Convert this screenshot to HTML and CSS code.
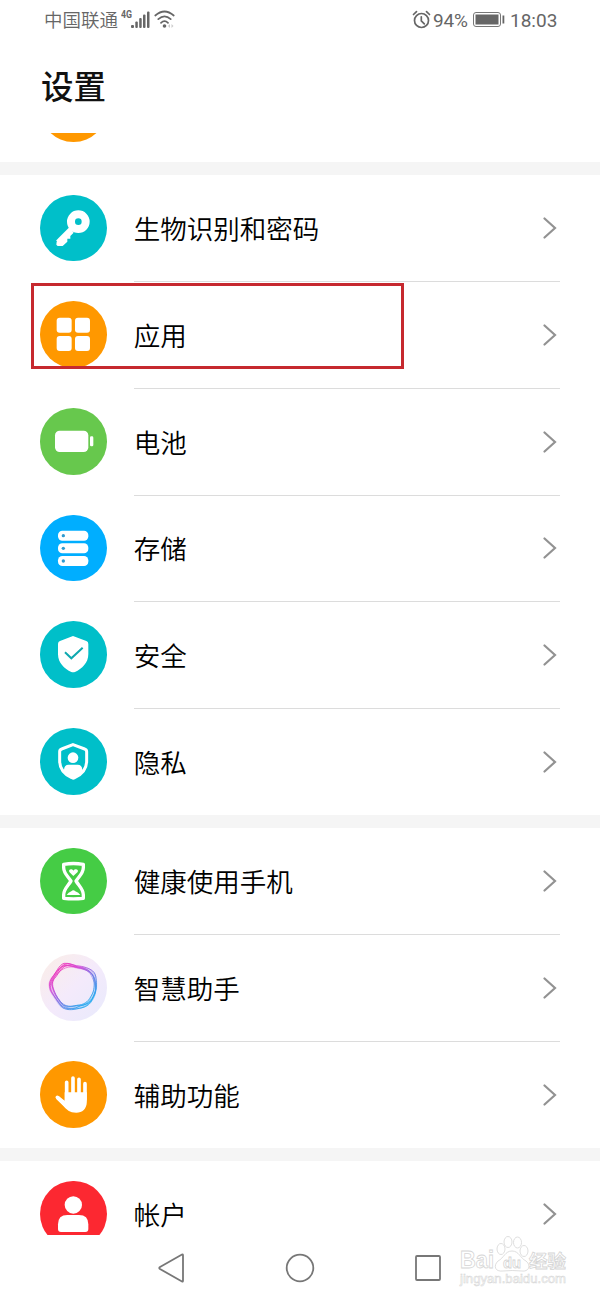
FILE: index.html
```html
<!DOCTYPE html>
<html lang="zh-CN">
<head>
<meta charset="utf-8">
<title>设置</title>
<link rel="stylesheet" href="styles.css">
</head>
<body>
<div class="phone">
  <header class="status">
    <span class="carrier">中国联通</span>
    <svg class="signal" width="56" height="24" viewBox="0 0 56 24">
      <text class="net" x="0" y="10" textLength="11" lengthAdjust="spacingAndGlyphs">4G</text>
      <g fill="#666"><rect x="10" y="17" width="3" height="3" rx="1"/><rect x="14.3" y="13.5" width="2.5" height="6.5" rx="1"/><rect x="18.2" y="10" width="2.5" height="10" rx="1"/><rect x="22" y="6.500" width="2.500" height="13.500" rx="1"/><rect x="26" y="3.500" width="2.500" height="16.500" rx="1"/></g>
      <g fill="none" stroke="#666" stroke-width="1.700" stroke-linecap="round"><path d="M34.300 7.500Q43.500-.5 52.700 7.500M37.300 11.200Q43.500 5.500 49.700 11.200M40 14.800Q43.500 11.300 47 14.800"/></g>
      <circle cx="43.500" cy="18" r="1.800" fill="#666"/>
      <path d="M49 16v4l-2-2zM50.500 16v4l2-2z" fill="#ccc"/>
    </svg>
    <span class="spacer"></span>
    <svg class="alarm" width="20" height="20" viewBox="0 0 20 20" fill="none" stroke="#666" stroke-width="1.700" stroke-linecap="round"><circle cx="9.500" cy="10.500" r="7"/><path d="M9.300 6.800v4l3 3M1.500 4.500l3-2.800M14.500 1.700l3 2.800"/></svg>
    <span class="level">94%</span>
    <svg class="batt" width="34" height="18" viewBox="0 0 34 18"><rect x="1.500" y="1.500" width="27" height="14" rx="2.500" fill="none" stroke="#777"/><rect x="3.500" y="3.500" width="23" height="10" fill="#666"/><rect x="30.500" y="4.500" width="1.800" height="8" fill="#666"/></svg>
    <span class="clock">18:03</span>
  </header>
  <h1 class="title">设置</h1>

  <main class="list">
    <section class="group">
      <div class="row row-scrolled"><span class="icon orange"></span></div>
    </section>

    <section class="group">
      <div class="row">
        <svg class="icon teal" viewBox="0 0 200 200"><g fill="none" stroke="#fff"><circle cx="115" cy="80" r="22" stroke-width="24"/><path d="M98 98L54 142" stroke-width="16"/></g><path d="M50 140L89 101L101 113L91 123V131H82V140L68 153H53L49 149Z" fill="#fff"/></svg>
        <div class="cell"><span class="label">生物识别和密码</span><svg class="chevron" viewBox="0 0 14 24"><path d="M1.500 2.500L12 12L1.500 21.500"/></svg></div>
      </div>
      <div class="row">
        <svg class="icon orange" viewBox="0 0 200 200"><g fill="#fff"><rect x="50" y="50" width="45" height="45" rx="9"/><rect x="105" y="50" width="45" height="45" rx="9"/><rect x="50" y="105" width="45" height="45" rx="9"/><rect x="105" y="105" width="45" height="45" rx="9"/></g></svg>
        <div class="cell"><span class="label">应用</span><svg class="chevron" viewBox="0 0 14 24"><path d="M1.500 2.500L12 12L1.500 21.500"/></svg></div>
        <span class="marker"></span>
      </div>
      <div class="row">
        <svg class="icon green" viewBox="0 0 200 200"><g fill="#fff"><rect x="45" y="68" width="100" height="64" rx="14"/><rect x="150" y="85" width="10" height="30" rx="4"/></g></svg>
        <div class="cell"><span class="label">电池</span><svg class="chevron" viewBox="0 0 14 24"><path d="M1.500 2.500L12 12L1.500 21.500"/></svg></div>
      </div>
      <div class="row">
        <svg class="icon blue" viewBox="0 0 200 200"><g fill="#fff"><rect x="54" y="47" width="91" height="30" rx="13"/><rect x="54" y="85" width="91" height="30" rx="13"/><rect x="54" y="123" width="91" height="30" rx="13"/></g><g fill="#2f9bd0"><circle cx="70" cy="62" r="5"/><circle cx="70" cy="100" r="5"/><circle cx="70" cy="138" r="5"/></g></svg>
        <div class="cell"><span class="label">存储</span><svg class="chevron" viewBox="0 0 14 24"><path d="M1.500 2.500L12 12L1.500 21.500"/></svg></div>
      </div>
      <div class="row">
        <svg class="icon teal" viewBox="0 0 200 200"><path d="M99 45L139 60Q145 62 145 69V99C145 126 126 143 105 153Q99 155 94 153C73 143 54 126 54 99V69Q54 62 60 60Z" fill="#fff"/><path d="M75 94L94 112L128 80" fill="none" stroke="#0fa9b0" stroke-width="6"/></svg>
        <div class="cell"><span class="label">安全</span><svg class="chevron" viewBox="0 0 14 24"><path d="M1.500 2.500L12 12L1.500 21.500"/></svg></div>
      </div>
      <div class="row">
        <svg class="icon teal" viewBox="0 0 200 200"><path d="M99 50L134 63Q140 65 140 71V99C140 123 124 140 104 149Q99 152 95 149C75 140 59 123 59 99V71Q59 65 65 63Z" fill="none" stroke="#fff" stroke-width="9"/><circle cx="99" cy="89" r="16" fill="#fff"/><path d="M72 125Q73 110 86 110H113Q126 110 127 125L134 123C126 138 115 148 99 153C84 148 72 138 65 123Z" fill="#fff"/></svg>
        <div class="cell"><span class="label">隐私</span><svg class="chevron" viewBox="0 0 14 24"><path d="M1.500 2.500L12 12L1.500 21.500"/></svg></div>
      </div>
    </section>

    <section class="group">
      <div class="row">
        <svg class="icon lime" viewBox="0 0 200 200"><path d="M71 49Q100 44 130 49V59C130 75 118 84 108 99C118 115 130 124 130 140V151Q100 154 71 151V140C71 124 83 115 93 99C83 84 71 75 71 59Z" fill="none" stroke="#fff" stroke-width="10" stroke-linejoin="round"/><path d="M100 84L88 72C84 63 96 61 100 68C105 61 117 63 113 72ZM80 141Q85 134 94 130Q100 124 106 130Q116 134 121 141Z" fill="#fff"/></svg>
        <div class="cell"><span class="label">健康使用手机</span><svg class="chevron" viewBox="0 0 14 24"><path d="M1.500 2.500L12 12L1.500 21.500"/></svg></div>
      </div>
      <div class="row">
        <svg class="icon halo" viewBox="0 0 200 200">
          <defs><linearGradient id="ring" x1=".1" y1=".1" x2=".8" y2=".9"><stop offset="0" stop-color="#f02cb4"/><stop offset=".3" stop-color="#cf48d8"/><stop offset=".62" stop-color="#6f78e5"/><stop offset="1" stop-color="#25a9ef"/></linearGradient></defs>
          <g fill="none" stroke="url(#ring)" stroke-width="2.500">
            <path d="M74 34C90 28 104 40 122 41C144 45 160 54 164 68C168 85 169 108 157 128C149 147 136 157 114 157C95 162 76 166 65 156C55 145 48 133 38 117C28 102 27 84 40 70C52 58 60 40 74 34Z" stroke-width="10" opacity=".3"/>
            <path d="M72 28C88 25 102 37 124 37C147 42 164 50 167 66C170 84 172 101 163 121C155 142 147 155 126 161C104 167 84 171 68 161C57 151 51 138 40 123C27 107 24 87 36 71C49 56 56 33 72 28Z"/>
            <path d="M77 36C92 31 106 42 122 43C141 48 157 57 161 72C164 91 164 110 153 127C144 145 130 153 111 154C91 158 78 159 67 151C58 139 51 129 43 115C34 98 34 85 44 73C54 62 62 42 77 36Z"/>
            <path d="M66 38C82 29 99 40 120 39C145 43 157 58 164 76C170 96 169 112 159 130C152 147 142 151 122 155C100 167 80 168 66 156C55 144 44 131 35 113C27 96 32 80 41 65C49 53 54 46 66 38Z"/>
            <path d="M82 29C98 29 111 41 128 43C149 49 157 58 163 73C168 94 171 112 157 133C143 150 128 157 109 155C86 161 72 155 61 142C48 130 45 114 38 99C30 84 41 71 50 57C60 44 65 33 82 29Z"/>
            <path d="M70 45C89 34 113 39 134 46C154 55 157 72 164 88C170 106 168 120 158 137C146 160 124 164 102 164C80 166 66 153 56 139C44 124 39 108 38 91C37 73 50 56 70 45Z" opacity=".7"/>
          </g>
        </svg>
        <div class="cell"><span class="label">智慧助手</span><svg class="chevron" viewBox="0 0 14 24"><path d="M1.500 2.500L12 12L1.500 21.500"/></svg></div>
      </div>
      <div class="row">
        <svg class="icon orange" viewBox="0 0 200 200"><g stroke="#fff" stroke-width="11" stroke-linecap="round"><path d="M80 64V120M99 51V110M117 55V110M135 68V115M52 109L78 135"/></g><path d="M74 94H140.500V123C140 144 127 155 109 155C89 155 79 145 70 134L48 113L57 106L74 119Z" fill="#fff"/></svg>
        <div class="cell"><span class="label">辅助功能</span><svg class="chevron" viewBox="0 0 14 24"><path d="M1.500 2.500L12 12L1.500 21.500"/></svg></div>
      </div>
    </section>

    <section class="group">
      <div class="row">
        <svg class="icon red" viewBox="0 0 200 200"><g fill="#fff"><circle cx="100" cy="72" r="26"/><path d="M54 130Q54 102 82 102H117Q145 102 145 130V144Q145 153 136 153H63Q54 153 54 144Z"/></g></svg>
        <div class="cell"><span class="label">帐户</span><svg class="chevron" viewBox="0 0 14 24"><path d="M1.500 2.500L12 12L1.500 21.500"/></svg></div>
      </div>
    </section>
  </main>

  <nav class="navbar">
    <svg width="30" height="32" viewBox="0 0 30 32"><path d="M3 15L25 2.500Q26 2 26 3.500V28.500Q26 30 25 29.500L3 17Q1.500 16 3 15Z"/></svg>
    <svg width="32" height="32" viewBox="0 0 32 32"><circle cx="16" cy="16" r="13.300"/></svg>
    <svg width="30" height="32" viewBox="0 0 30 32"><rect x="3" y="4" width="24" height="24" rx="1"/></svg>
    <svg class="watermark" width="112" height="60" viewBox="0 0 112 60">
      <text class="wm-big" x="3" y="35" textLength="34" lengthAdjust="spacingAndGlyphs">Bai</text>
      <path d="M55 18C62 18 63 25 69 28C75 33 71 39 65 38Q55 37 46 38C38 39 36 33 41 28C47 25 48 18 55 18Z"/>
      <ellipse cx="44" cy="16" rx="4" ry="5.500"/><ellipse cx="51" cy="9" rx="4" ry="5.500"/><ellipse cx="60.500" cy="9.500" rx="4" ry="5.500"/><ellipse cx="67" cy="18" rx="4" ry="5.500"/>
      <text class="wm-du" x="46" y="35" textLength="18" lengthAdjust="spacingAndGlyphs">du</text>
      <text class="wm-cn" x="72" y="35" textLength="37" lengthAdjust="spacingAndGlyphs">经验</text>
      <text class="wm-url" x="3" y="50" textLength="106" lengthAdjust="spacingAndGlyphs">jingyan.baidu.com</text>
    </svg>
  </nav>
</div>
</body>
</html>
```
FILE: styles.css
```css
* { box-sizing: border-box; }
body { margin: 0; background: #fff; font-family: Roboto, "Noto Sans CJK SC", sans-serif; }
.phone { width: 600px; height: 1300px; display: flex; flex-direction: column; overflow: hidden; }

.status { flex: none; height: 41px; display: flex; align-items: center; padding: 0 43px 0 44px; color: #666; font-size: 19px; line-height: 24px; }
.carrier { font-family: "Noto Sans CJK SC", sans-serif; font-size: 18.500px; font-weight: 350; width: 74px; white-space: nowrap; margin-top: -3px; }
.signal { margin-left: 3px; margin-top: -1px; }
.net { font: 700 10.500px Roboto, sans-serif; fill: #666; }
.spacer { flex: 1; }
.alarm { margin: -2px 1px 0 0; }
.level { width: 37px; white-space: nowrap; letter-spacing: -.2px; }
.batt { margin: -1px 2px 0 2px; }
.clock { width: 47px; white-space: nowrap; }
.alarm, .level, .batt { transform: translateX(-2px); }

.title { flex: none; margin: 0; height: 92px; padding: 20px 0 0 41px; font: 500 32.500px/48px "Noto Sans CJK SC", sans-serif; color: #111; }

.list { flex: none; display: flow-root; height: 1102px; overflow: hidden; }
.group + .group { border-top: 13.330px solid #f5f5f5; }
.row { position: relative; height: 106.670px; display: flex; align-items: center; padding: 0 40px; gap: 27px; }
.row-scrolled { margin-top: -78px; }
.icon { flex: none; width: 66.670px; height: 66.670px; border-radius: 50%; }
.orange { background: #ff9800; }
.teal { background: #00bfc9; }
.green { background: #67c84d; }
.blue { background: #00aeff; }
.lime { background: #45cc45; }
.red { background: #fc2831; }
.halo { background: linear-gradient(135deg, #fbeee6, #f4eafb 50%, #e8eafc); }

.cell { flex: 1; height: 100%; display: flex; align-items: center; justify-content: space-between; padding-right: 3px; box-shadow: 0 1px #dcdcdc; }
.row:last-child .cell { box-shadow: none; }
.label { font: 350 26.500px/40px "Noto Sans CJK SC", sans-serif; color: #000; padding-top: 1px; }
.chevron { width: 14px; height: 24px; margin-top: 1px; fill: none; stroke: #929292; stroke-width: 2.200; stroke-linecap: round; }
.marker { position: absolute; left: 31px; top: 1.330px; width: 373px; height: 86px; border: 3px solid #c6292f; }

.navbar { flex: 1; position: relative; display: grid; grid-template-columns: 30px 32px 30px; justify-content: center; align-items: center; column-gap: 97px; fill: none; stroke: #777; stroke-width: 1.800; }
.watermark { position: absolute; left: 457px; top: -2px; fill: #fff; stroke: #d5d5d5; stroke-width: .8; }
.wm-big { font: 700 24px "Liberation Sans", sans-serif; }
.wm-du { font: 700 15px "Liberation Sans", sans-serif; }
.wm-cn { font: 700 18px "Noto Sans CJK SC", sans-serif; }
.wm-url { font: 400 12px "Liberation Sans", sans-serif; stroke-width: .5; }
```
